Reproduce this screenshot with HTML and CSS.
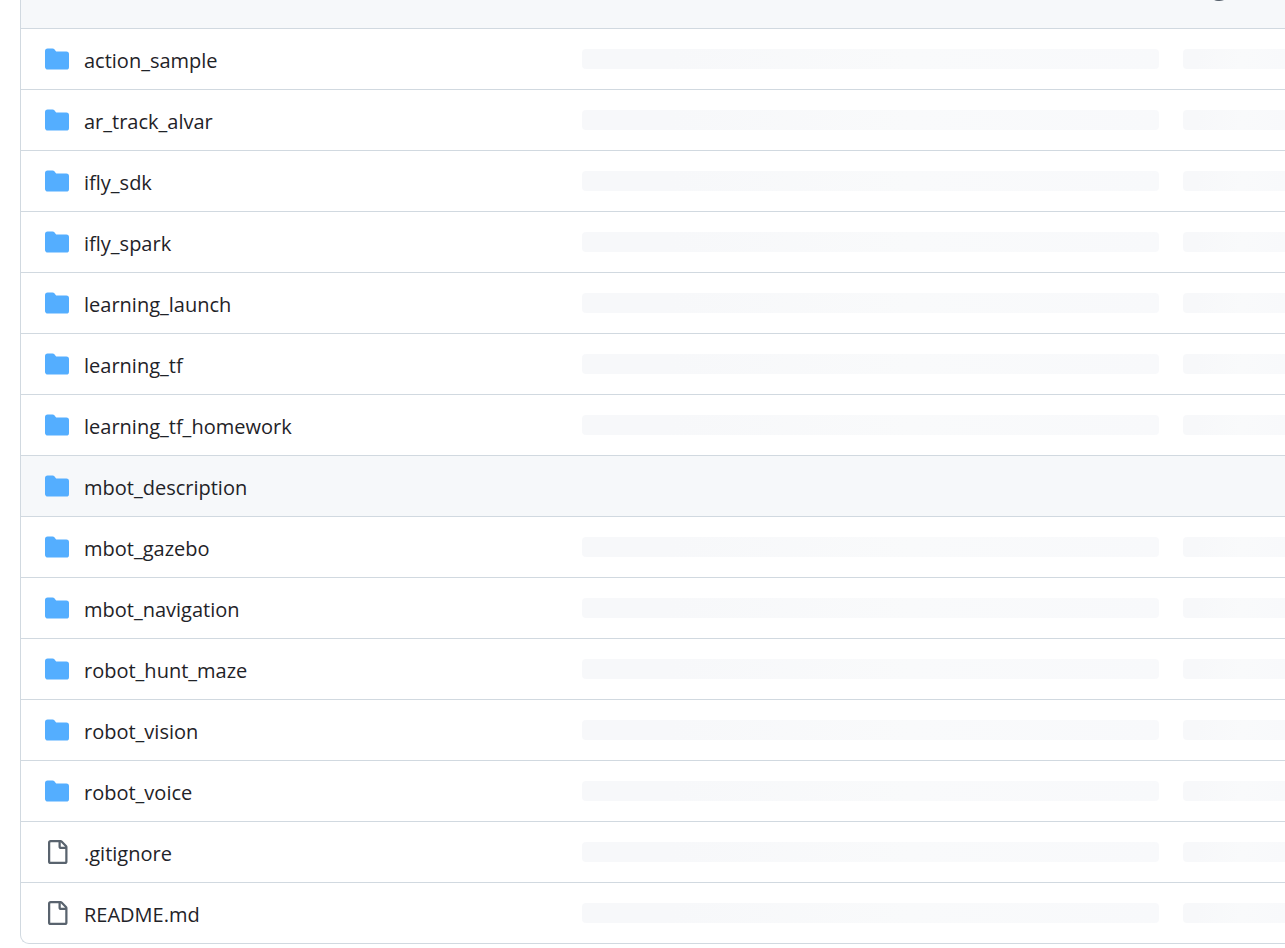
FILE: index.html
```html
<!DOCTYPE html>
<html lang="en">
<head>
    <meta charset="UTF-8">
    <meta name="viewport" content="width=device-width, initial-scale=1.0">
    <title>Repository files</title>
    <link rel="stylesheet" href="styles.css">
</head>
<body>
    <svg class="sprite" aria-hidden="true">
        <symbol id="folder" viewBox="0 0 16 16">
            <path d="M1.75 1A1.75 1.75 0 0 0 0 2.75v10.5C0 14.216.784 15 1.75 15h12.5A1.75 1.75 0 0 0 16 13.25v-8.5A1.75 1.75 0 0 0 14.25 3H7.5a.25.25 0 0 1-.2-.1l-.9-1.2C6.07 1.26 5.55 1 5 1H1.75Z"/>
        </symbol>
        <symbol id="file" viewBox="0 0 16 16">
            <path d="M2 1.75C2 .784 2.784 0 3.75 0h6.586c.464 0 .909.184 1.237.513l2.914 2.914c.329.328.513.773.513 1.237v9.586A1.75 1.75 0 0 1 13.25 16h-9.5A1.75 1.75 0 0 1 2 14.25Zm1.75-.25a.25.25 0 0 0-.25.25v12.5c0 .138.112.25.25.25h9.5a.25.25 0 0 0 .25-.25V6h-2.75A1.75 1.75 0 0 1 9 4.25V1.5Zm6.75.062V4.25c0 .138.112.25.25.25h2.688l-.011-.013-2.914-2.914-.013-.011Z"/>
        </symbol>
        <symbol id="history" viewBox="0 0 16 16">
            <path d="m.427 1.927 1.215 1.215a8.002 8.002 0 1 1-1.6 5.685.75.75 0 1 1 1.493-.154 6.5 6.5 0 1 0 1.18-4.458l1.358 1.358A.25.25 0 0 1 3.896 6H.25A.25.25 0 0 1 0 5.75V2.104a.25.25 0 0 1 .427-.177ZM7.75 4a.75.75 0 0 1 .75.75v2.992l2.028.812a.75.75 0 0 1-.557 1.392l-2.5-1A.751.751 0 0 1 7 8.25v-3.5A.75.75 0 0 1 7.75 4Z"/>
        </symbol>
    </svg>
    <main class="file-box">
        <div class="commit-bar">
            <a href="#" aria-label="Commit history"><svg class="icon"><use href="#history"/></svg></a>
        </div>
        <table class="files" aria-label="Folders and files">
            <colgroup>
                <col class="col-name">
                <col class="col-message">
                <col class="col-date">
            </colgroup>
            <tbody>
                <tr>
                    <td><div class="name"><svg class="icon folder"><use href="#folder"/></svg><a href="#">action_sample</a></div></td>
                    <td><div class="skeleton"></div></td>
                    <td class="date"><div class="skeleton"></div></td>
                </tr>
                <tr>
                    <td><div class="name"><svg class="icon folder"><use href="#folder"/></svg><a href="#">ar_track_alvar</a></div></td>
                    <td><div class="skeleton"></div></td>
                    <td class="date"><div class="skeleton"></div></td>
                </tr>
                <tr>
                    <td><div class="name"><svg class="icon folder"><use href="#folder"/></svg><a href="#">ifly_sdk</a></div></td>
                    <td><div class="skeleton"></div></td>
                    <td class="date"><div class="skeleton"></div></td>
                </tr>
                <tr>
                    <td><div class="name"><svg class="icon folder"><use href="#folder"/></svg><a href="#">ifly_spark</a></div></td>
                    <td><div class="skeleton"></div></td>
                    <td class="date"><div class="skeleton"></div></td>
                </tr>
                <tr>
                    <td><div class="name"><svg class="icon folder"><use href="#folder"/></svg><a href="#">learning_launch</a></div></td>
                    <td><div class="skeleton"></div></td>
                    <td class="date"><div class="skeleton"></div></td>
                </tr>
                <tr>
                    <td><div class="name"><svg class="icon folder"><use href="#folder"/></svg><a href="#">learning_tf</a></div></td>
                    <td><div class="skeleton"></div></td>
                    <td class="date"><div class="skeleton"></div></td>
                </tr>
                <tr>
                    <td><div class="name"><svg class="icon folder"><use href="#folder"/></svg><a href="#">learning_tf_homework</a></div></td>
                    <td><div class="skeleton"></div></td>
                    <td class="date"><div class="skeleton"></div></td>
                </tr>
                <tr class="active">
                    <td><div class="name"><svg class="icon folder"><use href="#folder"/></svg><a href="#">mbot_description</a></div></td>
                    <td></td>
                    <td class="date"></td>
                </tr>
                <tr>
                    <td><div class="name"><svg class="icon folder"><use href="#folder"/></svg><a href="#">mbot_gazebo</a></div></td>
                    <td><div class="skeleton"></div></td>
                    <td class="date"><div class="skeleton"></div></td>
                </tr>
                <tr>
                    <td><div class="name"><svg class="icon folder"><use href="#folder"/></svg><a href="#">mbot_navigation</a></div></td>
                    <td><div class="skeleton"></div></td>
                    <td class="date"><div class="skeleton"></div></td>
                </tr>
                <tr>
                    <td><div class="name"><svg class="icon folder"><use href="#folder"/></svg><a href="#">robot_hunt_maze</a></div></td>
                    <td><div class="skeleton"></div></td>
                    <td class="date"><div class="skeleton"></div></td>
                </tr>
                <tr>
                    <td><div class="name"><svg class="icon folder"><use href="#folder"/></svg><a href="#">robot_vision</a></div></td>
                    <td><div class="skeleton"></div></td>
                    <td class="date"><div class="skeleton"></div></td>
                </tr>
                <tr>
                    <td><div class="name"><svg class="icon folder"><use href="#folder"/></svg><a href="#">robot_voice</a></div></td>
                    <td><div class="skeleton"></div></td>
                    <td class="date"><div class="skeleton"></div></td>
                </tr>
                <tr>
                    <td><div class="name"><svg class="icon"><use href="#file"/></svg><a href="#">.gitignore</a></div></td>
                    <td><div class="skeleton"></div></td>
                    <td class="date"><div class="skeleton"></div></td>
                </tr>
                <tr>
                    <td><div class="name"><svg class="icon"><use href="#file"/></svg><a href="#">README.md</a></div></td>
                    <td><div class="skeleton"></div></td>
                    <td class="date"><div class="skeleton"></div></td>
                </tr>
            </tbody>
        </table>
    </main>
</body>
</html>
```
FILE: styles.css
```css
body {
    margin: 0;
    background-color: #ffffff;
    color: #1f2328;
    font-family: "Open Sans", "Noto Sans", sans-serif;
    font-size: 20px;
    line-height: 30px;
    overflow: hidden;
}
.sprite {
    display: none;
}
.file-box {
    margin-top: -50px;
    margin-left: 20px;
    border-left: 1px solid #d1d9e0;
    border-bottom: 1px solid #d1d9e0;
    border-bottom-left-radius: 9px;
    overflow: hidden;
}
.commit-bar {
    display: flex;
    align-items: center;
    justify-content: flex-end;
    height: 78px;
    padding-right: 54px;
    background-color: #f6f8fa;
}
.commit-bar a {
    display: flex;
}
.icon {
    flex: none;
    width: 24px;
    height: 24px;
    fill: #59636e;
}
.icon.folder {
    fill: #54aeff;
}
.files {
    width: 100%;
    table-layout: fixed;
    border-collapse: separate;
    border-spacing: 0;
}
.col-name {
    width: 43.4%;
}
.col-message {
    width: 47.6%;
}
.files td {
    height: 60px;
    padding: 0 12px;
    border-top: 1px solid #d1d9e0;
    vertical-align: middle;
}
.files td:first-child {
    padding-left: 24px;
}
.files td.date {
    padding-right: 0;
}
.name {
    display: flex;
    align-items: center;
    gap: 15px;
}
.name a {
    padding-top: 3px;
    color: #1f2328;
    text-decoration: none;
}
.name a:hover {
    text-decoration: underline;
}
.active td {
    background-color: #f6f8fa;
}
.skeleton {
    height: 20px;
    border-radius: 4px;
    background: linear-gradient(100deg, #f7f8fa 15%, #f9fafb 57%, #f8f9fb);
}
.date .skeleton {
    border-top-right-radius: 0;
    border-bottom-right-radius: 0;
}
```
